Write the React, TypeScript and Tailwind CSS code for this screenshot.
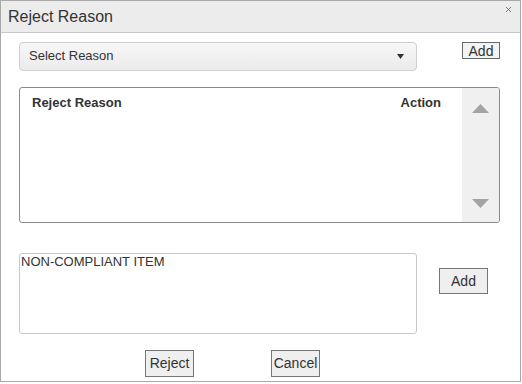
import { X } from "lucide-react";

const font = { fontFamily: '"Liberation Sans", Arial, sans-serif' };

function TriangleUp() {
  return (
    <svg width="17" height="9" viewBox="0 0 17 9">
      <polygon points="8.5,0 17,9 0,9" fill="#a3a3a3" />
    </svg>
  );
}

function TriangleDown() {
  return (
    <svg width="17" height="9" viewBox="0 0 17 9">
      <polygon points="0,0 17,0 8.5,9" fill="#a3a3a3" />
    </svg>
  );
}

export default function App() {
  return (
    <div className="w-[522px] h-[384px] bg-white" style={font}>
      <div className="w-[521px] h-[382px] border border-[#a9a9a9] flex flex-col text-[#333]">
        {/* Title bar */}
        <div className="h-[32px] shrink-0 bg-[#ececec] border-b border-[#c8c8c8] flex items-center justify-between pl-[7px] pr-[7px]">
          <span className="text-[16px] text-[#333]">Reject Reason</span>
          <X size={9} strokeWidth={2} className="text-[#555] -mt-[14px]" />
        </div>

        <div className="flex flex-col pl-[18px] pr-[20px]">
          {/* Select + Add */}
          <div className="flex items-start mt-[9px]">
            <div className="w-[398px] h-[29px] rounded-[4px] border border-[#cfcfcf] bg-gradient-to-b from-[#f7f7f7] to-[#ebebeb] flex items-center justify-between pl-[9px] pr-[12px]">
              <span className="text-[13px] text-[#333] -mt-[2px]">Select Reason</span>
              <svg width="7" height="5" viewBox="0 0 7 5">
                <polygon points="0,0 7,0 3.5,5" fill="#333" />
              </svg>
            </div>
            <button className="ml-auto w-[38px] h-[17px] border border-[#6a6a6a] bg-[#f3f3f3] text-[14px] leading-none text-[#333] flex items-center justify-center">
              Add
            </button>
          </div>

          {/* Table */}
          <div className="mt-[16px] w-[481px] h-[136px] border border-[#8a8a8a] rounded-[3px] flex overflow-hidden">
            <div className="flex-1 flex justify-between items-start pl-[12px] pr-[21px] pt-[5px]">
              <span className="text-[13px] font-bold text-[#333]">Reject Reason</span>
              <span className="text-[13px] font-bold text-[#333]">Action</span>
            </div>
            <div className="w-[37px] bg-[#f0f0f0] flex flex-col items-center justify-between pt-[16px] pb-[14px]">
              <TriangleUp />
              <TriangleDown />
            </div>
          </div>

          {/* Textarea + Add */}
          <div className="flex items-start mt-[30px]">
            <div className="w-[398px] h-[81px] rounded-[3px] border border-[#c8c8c8] pl-[1px] pt-0">
              <span className="block text-[13px] leading-[15px] text-[#333]">NON-COMPLIANT ITEM</span>
            </div>
            <button className="ml-[22px] mt-[15px] w-[49px] h-[26px] border border-[#767676] bg-[#efefef] text-[14px] text-[#333] flex items-center justify-center">
              Add
            </button>
          </div>

          {/* Footer buttons */}
          <div className="flex mt-[16px]">
            <button className="ml-[126px] w-[49px] h-[27px] border border-[#767676] bg-[#efefef] text-[14px] text-[#333] flex items-center justify-center">
              Reject
            </button>
            <button className="ml-[77px] w-[49px] h-[27px] border border-[#767676] bg-[#efefef] text-[14px] text-[#333] flex items-center justify-center overflow-hidden whitespace-nowrap">
              Cancel
            </button>
          </div>
        </div>
      </div>
    </div>
  );
}
